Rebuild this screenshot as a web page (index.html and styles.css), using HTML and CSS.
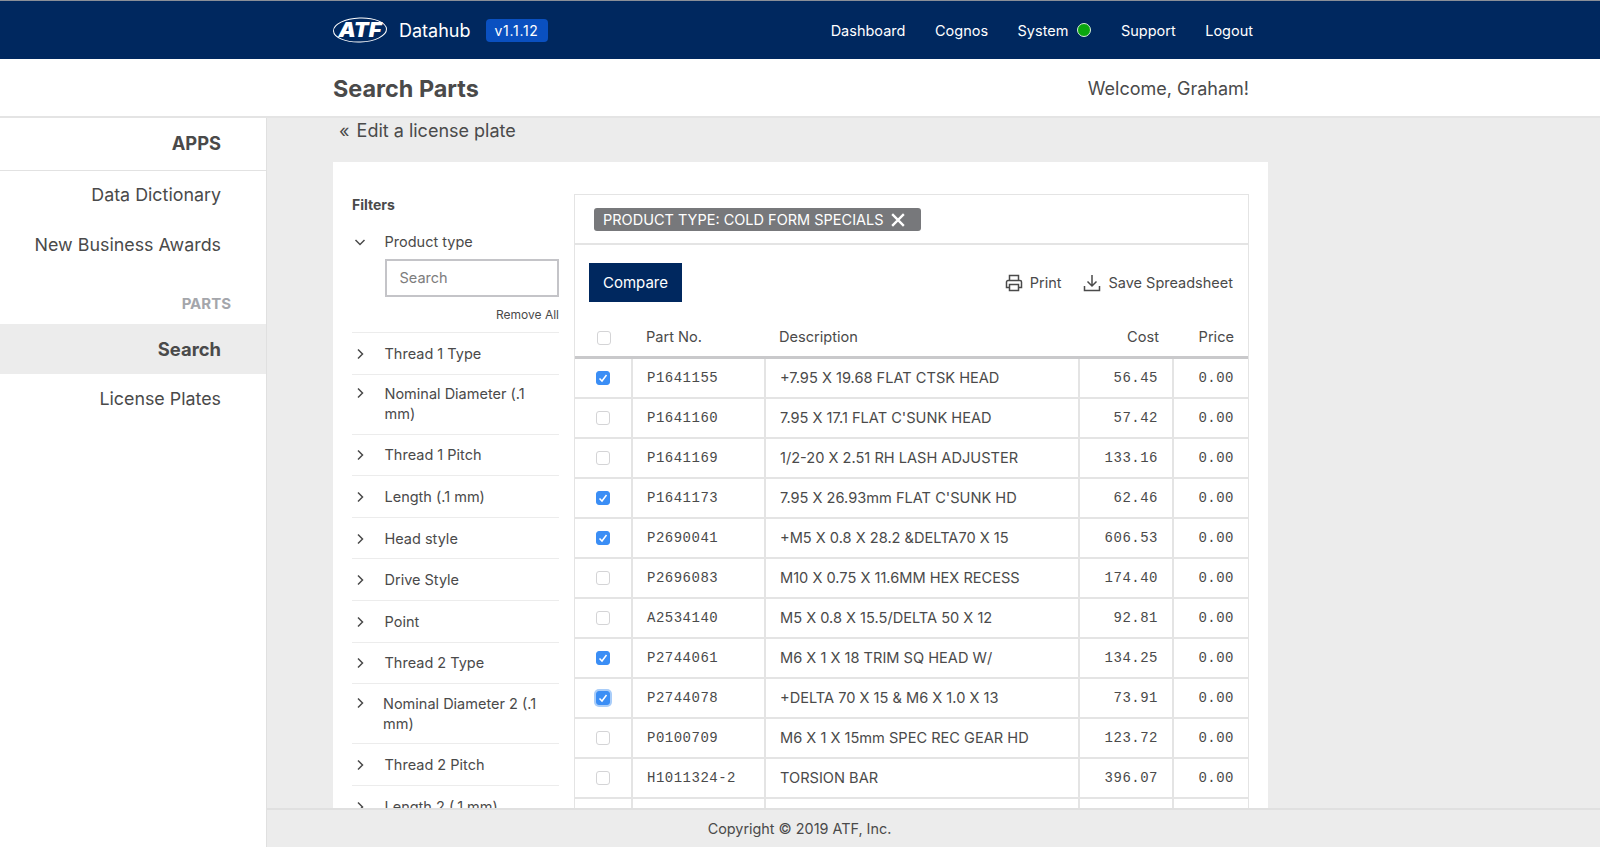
FILE: index.html
```html
<!DOCTYPE html>
<html lang="en">
<head>
<meta charset="utf-8">
<title>Search Parts</title>
<link rel="stylesheet" href="styles.css">
</head>
<body>
<header class="topbar">
  <div class="brand">
    <svg class="logo" viewBox="0 0 56 28" width="56" height="28" aria-label="ATF">
      <ellipse cx="28" cy="14" rx="26.500" ry="12" fill="none" stroke="#fff" stroke-width="1" transform="rotate(-2 28 14)"/>
      <text x="28" y="21" text-anchor="middle" class="logo-text" textLength="43" lengthAdjust="spacingAndGlyphs">ATF</text>
    </svg>
    <span class="brand-name">Datahub</span>
    <span class="version">v1.1.12</span>
  </div>
  <nav class="topnav">
    <a>Dashboard</a>
    <a>Cognos</a>
    <a class="system">System <i class="dot"></i></a>
    <a>Support</a>
    <a>Logout</a>
  </nav>
</header>
<div class="titlebar">
  <h1>Search Parts</h1>
  <span class="welcome">Welcome, Graham!</span>
</div>
<div class="shell">
  <aside class="sidebar">
    <div class="side-head">APPS</div>
    <a class="side-link first">Data Dictionary</a>
    <a class="side-link">New Business Awards</a>
    <div class="side-label">PARTS</div>
    <a class="side-link active">Search</a>
    <a class="side-link">License Plates</a>
  </aside>
  <div class="right">
    <main class="content">
      <a class="back"><span class="back-mark">«</span> Edit a license plate</a>
      <section class="card">
        <div class="filters">
          <h2>Filters</h2>
          <div class="filter open">
            <div class="filter-row">
              <svg class="chev" viewBox="0 0 12 12"><path d="M1.500 4l4.500 4.500L10.500 4"/></svg>
              <span>Product type</span>
            </div>
            <input class="filter-search" type="text" placeholder="Search">
            <div class="remove-all">Remove All</div>
          </div>
          <div class="filter filter-row"><svg class="chev" viewBox="0 0 12 12"><path d="M4 1.500l4.500 4.500L4 10.500"/></svg><span>Thread 1 Type</span></div>
          <div class="filter filter-row two"><svg class="chev" viewBox="0 0 12 12"><path d="M4 1.500l4.500 4.500L4 10.500"/></svg><span>Nominal Diameter (.1 mm)</span></div>
          <div class="filter filter-row"><svg class="chev" viewBox="0 0 12 12"><path d="M4 1.500l4.500 4.500L4 10.500"/></svg><span>Thread 1 Pitch</span></div>
          <div class="filter filter-row"><svg class="chev" viewBox="0 0 12 12"><path d="M4 1.500l4.500 4.500L4 10.500"/></svg><span>Length (.1 mm)</span></div>
          <div class="filter filter-row"><svg class="chev" viewBox="0 0 12 12"><path d="M4 1.500l4.500 4.500L4 10.500"/></svg><span>Head style</span></div>
          <div class="filter filter-row"><svg class="chev" viewBox="0 0 12 12"><path d="M4 1.500l4.500 4.500L4 10.500"/></svg><span>Drive Style</span></div>
          <div class="filter filter-row"><svg class="chev" viewBox="0 0 12 12"><path d="M4 1.500l4.500 4.500L4 10.500"/></svg><span>Point</span></div>
          <div class="filter filter-row"><svg class="chev" viewBox="0 0 12 12"><path d="M4 1.500l4.500 4.500L4 10.500"/></svg><span>Thread 2 Type</span></div>
          <div class="filter filter-row two tight"><svg class="chev" viewBox="0 0 12 12"><path d="M4 1.500l4.500 4.500L4 10.500"/></svg><span>Nominal Diameter 2 (.1 mm)</span></div>
          <div class="filter filter-row"><svg class="chev" viewBox="0 0 12 12"><path d="M4 1.500l4.500 4.500L4 10.500"/></svg><span>Thread 2 Pitch</span></div>
          <div class="filter filter-row"><svg class="chev" viewBox="0 0 12 12"><path d="M4 1.500l4.500 4.500L4 10.500"/></svg><span>Length 2 (.1 mm)</span></div>
        </div>
        <div class="results">
          <div class="tags">
            <span class="tag">PRODUCT TYPE: COLD FORM SPECIALS
              <svg viewBox="0 0 12 12" width="14" height="14"><path d="M1 1l10 10M11 1L1 11"/></svg>
            </span>
          </div>
          <div class="toolbar">
            <button class="compare" type="button">Compare</button>
            <div class="actions">
              <a class="action">
                <svg viewBox="0 0 18 18" width="18" height="18"><path d="M4.500 6.500V1.500h9v5M4.500 13.500H1.500V8a1.500 1.500 0 0 1 1.500-1.500h12A1.500 1.500 0 0 1 16.500 8v5.500h-3M4.500 10.500h9v6h-9z"/></svg>
                Print
              </a>
              <a class="action">
                <svg viewBox="0 0 18 18" width="18" height="18"><path d="M9 1v10.500M4.500 7.500L9 12l4.500-4.500M1.500 12v4.500h15V12"/></svg>
                Save Spreadsheet
              </a>
            </div>
          </div>
          <table class="parts">
            <colgroup><col class="c-check"><col class="c-part"><col class="c-desc"><col class="c-cost"><col class="c-price"></colgroup>
            <thead>
              <tr><th class="check"><input type="checkbox"></th><th>Part No.</th><th>Description</th><th class="num">Cost</th><th class="num">Price</th></tr>
            </thead>
            <tbody>
              <tr><td class="check"><input type="checkbox" checked></td><td class="mono">P1641155</td><td>+7.95 X 19.68 FLAT CTSK HEAD</td><td class="mono num">56.45</td><td class="mono num">0.00</td></tr>
              <tr><td class="check"><input type="checkbox"></td><td class="mono">P1641160</td><td>7.95 X 17.1 FLAT C'SUNK HEAD</td><td class="mono num">57.42</td><td class="mono num">0.00</td></tr>
              <tr><td class="check"><input type="checkbox"></td><td class="mono">P1641169</td><td>1/2-20 X 2.51 RH LASH ADJUSTER</td><td class="mono num">133.16</td><td class="mono num">0.00</td></tr>
              <tr><td class="check"><input type="checkbox" checked></td><td class="mono">P1641173</td><td>7.95 X 26.93mm FLAT C'SUNK HD</td><td class="mono num">62.46</td><td class="mono num">0.00</td></tr>
              <tr><td class="check"><input type="checkbox" checked></td><td class="mono">P2690041</td><td>+M5 X 0.8 X 28.2 &amp;DELTA70 X 15</td><td class="mono num">606.53</td><td class="mono num">0.00</td></tr>
              <tr><td class="check"><input type="checkbox"></td><td class="mono">P2696083</td><td>M10 X 0.75 X 11.6MM HEX RECESS</td><td class="mono num">174.40</td><td class="mono num">0.00</td></tr>
              <tr><td class="check"><input type="checkbox"></td><td class="mono">A2534140</td><td>M5 X 0.8 X 15.5/DELTA 50 X 12</td><td class="mono num">92.81</td><td class="mono num">0.00</td></tr>
              <tr><td class="check"><input type="checkbox" checked></td><td class="mono">P2744061</td><td>M6 X 1 X 18 TRIM SQ HEAD W/</td><td class="mono num">134.25</td><td class="mono num">0.00</td></tr>
              <tr><td class="check"><input class="focused" type="checkbox" checked></td><td class="mono">P2744078</td><td>+DELTA 70 X 15 &amp; M6 X 1.0 X 13</td><td class="mono num">73.91</td><td class="mono num">0.00</td></tr>
              <tr><td class="check"><input type="checkbox"></td><td class="mono">P0100709</td><td>M6 X 1 X 15mm SPEC REC GEAR HD</td><td class="mono num">123.72</td><td class="mono num">0.00</td></tr>
              <tr><td class="check"><input type="checkbox"></td><td class="mono">H1011324-2</td><td>TORSION BAR</td><td class="mono num">396.07</td><td class="mono num">0.00</td></tr>
              <tr><td class="check"></td><td class="mono"></td><td></td><td class="mono num"></td><td class="mono num"></td></tr>
            </tbody>
          </table>
        </div>
      </section>
    </main>
    <footer class="footer">Copyright © 2019 ATF, Inc.</footer>
  </div>
</div>
</body>
</html>
```
FILE: styles.css
```css
* { box-sizing: border-box; }
html, body { height: 100%; }
body {
  margin: 0;
  height: 847px;
  overflow: hidden;
  display: flex;
  flex-direction: column;
  font-family: Inter, "Liberation Sans", sans-serif;
  color: #4a4a4a;
  background: #fff;
}
a { color: inherit; text-decoration: none; }

.topbar {
  flex: none;
  height: 59px;
  background: #00285f;
  border-top: 1px solid #8a8f98;
  display: flex;
  align-items: center;
  justify-content: space-between;
  padding: 0 347px 0 332px;
  color: #fff;
}
.brand { display: flex; align-items: center; }
.logo { display: block; }
.logo-text { font: italic 900 20px Inter, sans-serif; fill: #fff; }
.brand-name { font-size: 18px; margin-left: 11px; }
.version {
  margin-left: 15px;
  background: #0a50c0;
  border-radius: 4px;
  font-size: 14px;
  letter-spacing: .7px;
  height: 23px;
  line-height: 23px;
  padding: 0 9px;
}
.topnav { display: flex; align-items: center; gap: 29.500px; font-size: 14.500px; }
.system { display: flex; align-items: center; gap: 9px; }
.dot {
  width: 14px;
  height: 14px;
  border-radius: 50%;
  background: #0aa60e;
  border: 1px solid #d8efd8;
}

.titlebar {
  flex: none;
  height: 59px;
  border-bottom: 2px solid #e4e4e4;
  display: flex;
  align-items: center;
  justify-content: space-between;
  padding: 2px 351px 0 333px;
}
.titlebar h1 { margin: 0; font-size: 23.400px; font-weight: 700; }
.welcome { font-size: 18px; }

.shell { flex: 1; min-height: 0; display: flex; }
.sidebar {
  flex: none;
  width: 267px;
  background: #fff;
  border-right: 1px solid #e0e0e0;
  text-align: right;
  font-size: 17.850px;
}
.side-head {
  height: 53px;
  line-height: 51px;
  padding-right: 45px;
  font-size: 18.300px;
  font-weight: 700;
  border-bottom: 1px solid #e2e2e2;
}
.side-link { display: block; height: 50px; line-height: 50px; padding-right: 45px; }
.side-link.first { margin-top: -1px; }
.side-label {
  height: 40px;
  margin-top: 14px;
  line-height: 40px;
  padding-right: 35px;
  font-size: 15px;
  font-weight: 700;
  color: #a4a6ab;
}
.side-link.active { background: #ececec; font-size: 18.400px; font-weight: 700; }

.right { flex: 1; min-width: 0; display: flex; flex-direction: column; }
.content {
  flex: 1;
  min-height: 0;
  overflow: hidden;
  background: #ececec;
  padding-left: 66px;
}
.back { display: block; height: 44px; padding: 1px 0 0 6px; font-size: 18px; line-height: 24px; }
.back-mark { margin-right: 2px; }
.card {
  width: 935px;
  background: #fff;
  padding: 32px 19px 19px;
  display: flex;
}

.filters { flex: none; width: 207px; margin-right: 15px; font-size: 14.500px; }
.filters h2 { margin: 1px 0 10px; font-size: 14px; font-weight: 700; line-height: 20px; }
.filter { border-bottom: 1px solid #ececec; }
.filter.open { padding-bottom: 9px; }
.filter-row {
  display: flex;
  align-items: flex-start;
  padding: 10.800px 0 9.800px;
  line-height: 20px;
}
.filter-row.two { padding: 9.500px 0; }
.filter-row.two .chev { margin-top: 3px; }
.filter-row.tight span { margin-left: -1.500px; }
.open .filter-row { padding-top: 7px; padding-bottom: 7px; }
.chev {
  flex: none;
  width: 12px;
  height: 12px;
  margin: 4px 18.500px 0 2px;
  fill: none;
  stroke: #4a4a4a;
  stroke-width: 1.500;
}
.filter-search {
  display: block;
  width: 174px;
  height: 38px;
  margin-left: 33px;
  padding: 0 12.500px 2px;
  border: 2px solid #c4c4c8;
  outline: none;
  font: 14.500px Inter, sans-serif;
  color: #4a4a4a;
}
.filter-search::placeholder { color: #7d7d7d; opacity: 1; }
.remove-all { margin-top: 10px; text-align: right; font-size: 12px; line-height: 16px; }

.results { flex: none; width: 675px; border: 2px solid #e4e4e4; border-width: 1px 1px 0; }
.tags {
  height: 50px;
  border-bottom: 2px solid #e4e4e4;
  padding-top: 13px;
  padding-left: 19px;
}
.tag {
  display: inline-flex;
  align-items: center;
  gap: 7px;
  height: 23px;
  padding: 0 16px 0 9px;
  background: #77787b;
  color: #fff;
  border-radius: 3px;
  font-size: 14.500px;
}
.tag svg { fill: none; stroke: #fff; stroke-width: 2; }
.toolbar {
  height: 75px;
  padding: 0 15px 18px 14px;
  display: flex;
  align-items: flex-end;
  justify-content: space-between;
}
.compare {
  width: 93px;
  height: 39px;
  background: #00285f;
  border: 0;
  color: #fff;
  font: 15px Inter, sans-serif;
}
.actions { display: flex; gap: 22px; font-size: 14.500px; height: 39px; align-items: center; }
.action { display: flex; align-items: center; gap: 7px; }
.action svg { fill: none; stroke: #4a4a4a; stroke-width: 1.500; }

.parts { width: 673px; table-layout: fixed; border-collapse: collapse; font-size: 14.600px; }
.c-check { width: 57px; }
.c-part { width: 133px; }
.c-desc { width: 314px; }
.c-cost { width: 94px; }
.c-price { width: 75px; }
.parts th {
  height: 37px;
  padding: 0 14px 2px;
  font-weight: 400;
  text-align: left;
  border-bottom: 3px solid #c9c9cb;
}
.parts td {
  height: 40px;
  padding: 0 14px;
  border-bottom: 2px solid #e4e4e4;
  border-left: 2px solid #e4e4e4;
}
.parts tbody tr:first-child td { height: 41px; }
.parts td:first-child { border-left: 0; }
.parts .num { text-align: right; }
.parts .check { padding: 0; text-align: center; }
.mono { font-family: "Liberation Mono", monospace; font-size: 14px; letter-spacing: .5px; }
.parts input {
  appearance: none;
  display: block;
  width: 14px;
  height: 14px;
  margin: 0 auto;
  border: 1px solid #d4d4d6;
  border-radius: 3px;
  background: #fff;
}
.parts input:checked {
  background: #3b8ef5 url("data:image/svg+xml,%3Csvg xmlns='http://www.w3.org/2000/svg' viewBox='0 0 14 14'%3E%3Cpath d='M3.500 7.500l2.500 2.500 4.500-6' fill='none' stroke='white' stroke-width='1.500'/%3E%3C/svg%3E") center/14px no-repeat;
  border-color: #3b8ef5;
}
.parts input.focused { box-shadow: 0 0 0 2px #a9cdf9; }

.footer {
  flex: none;
  height: 39px;
  background: #ececec;
  border-top: 2px solid #e0e0e0;
  text-align: center;
  font-size: 14.400px;
  line-height: 38px;
  padding-right: 268px;
}
```
